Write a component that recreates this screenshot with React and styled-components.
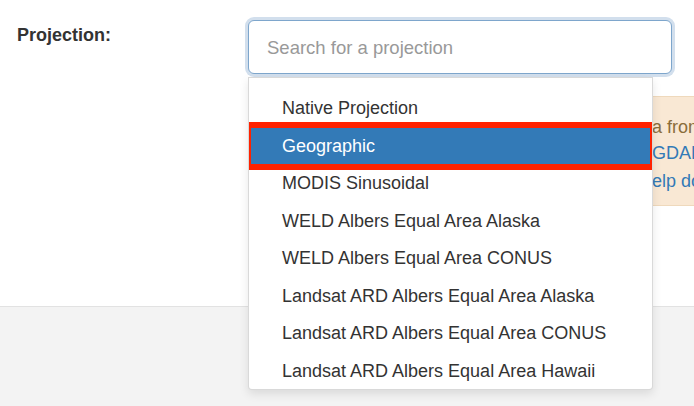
import React from "react";
import styled, { createGlobalStyle } from "styled-components";

const GlobalStyle = createGlobalStyle`
  html, body {
    margin: 0;
    padding: 0;
    background: #ffffff;
    overflow: hidden;
  }

  body {
    font-family: "Liberation Sans", Arial, Helvetica, sans-serif;
    color: #333333;
  }
`;

const Page = styled.div`
  width: 694px;
  height: 406px;
  display: flex;
  flex-direction: column;
  overflow: hidden;
`;

const Main = styled.section`
  height: 306px;
  box-sizing: border-box;
  padding: 20px 22px 0 17px;
  background: #ffffff;
`;

const FormRow = styled.div`
  display: grid;
  grid-template-columns: 231px 424px;
`;

const Label = styled.label`
  margin-top: 4px;
  font-size: 18px;
  line-height: 22px;
  font-weight: 700;
  color: #333333;
`;

const Field = styled.div`
  display: flex;
  flex-direction: column;
`;

const Combo = styled.div`
  position: relative;
  z-index: 2;
`;

const SearchInput = styled.input`
  display: block;
  width: 100%;
  height: 54px;
  box-sizing: border-box;
  margin: 0;
  padding: 2px 18px 0;
  font-family: inherit;
  font-size: 18.5px;
  color: #555555;
  background: #ffffff;
  border: 1px solid #7ea6cc;
  border-radius: 6px;
  box-shadow: 0 0 0 3px #d2dfed;
  outline: none;

  &::placeholder {
    color: #999999;
  }
`;

const Alert = styled.div`
  width: 480px;
  margin-top: 22px;
  box-sizing: border-box;
  padding: 17px 15px 11px;
  background: #f9e8d4;
  border: 1px solid #efd9bc;
  font-size: 18px;
  line-height: 26px;
  color: #8a6d3b;
  overflow: hidden;
`;

const Para = styled.p`
  margin: ${(p) => (p.$gap ? "2px" : "0")} 0 0;
  white-space: nowrap;
`;

const Lead = styled.span`
  display: inline-block;
  width: 388px;
  overflow: hidden;
  white-space: nowrap;
  vertical-align: bottom;
`;

const Link = styled.a`
  color: #337ab7;
  text-decoration: none;
`;

const Menu = styled.ul`
  position: absolute;
  top: calc(100% + 3px);
  left: 0;
  width: 405px;
  height: 313px;
  box-sizing: border-box;
  margin: 0;
  padding: 12px 0 0;
  list-style: none;
  background: #ffffff;
  border: 1px solid rgba(0, 0, 0, 0.15);
  border-radius: 0 0 4px 4px;
  box-shadow: 0 4px 10px rgba(0, 0, 0, 0.1);
  overflow: hidden;
`;

const Item = styled.li`
  position: relative;
  height: 37.5px;
  display: flex;
  align-items: center;
  padding-left: 33px;
  font-size: 18px;
  white-space: nowrap;
  color: ${(p) => (p.$active ? "#ffffff" : "#333333")};
  background: ${(p) => (p.$active ? "#337ab7" : "transparent")};
`;

const Highlight = styled.span`
  position: absolute;
  top: -6px;
  bottom: -5px;
  left: -4px;
  right: -4px;
  border: 6px solid #ff2200;
  pointer-events: none;
`;

const Footer = styled.footer`
  flex: 1;
  background: #f3f3f3;
  border-top: 1px solid #e2e2e2;
`;

const projections = [
  "Native Projection",
  "Geographic",
  "MODIS Sinusoidal",
  "WELD Albers Equal Area Alaska",
  "WELD Albers Equal Area CONUS",
  "Landsat ARD Albers Equal Area Alaska",
  "Landsat ARD Albers Equal Area CONUS",
  "Landsat ARD Albers Equal Area Hawaii",
];

const App = () => {
  const active = "Geographic";

  return (
    <Page>
      <GlobalStyle />
      <Main>
        <FormRow>
          <Label htmlFor="projection">Projection:</Label>
          <Field>
            <Combo>
              <SearchInput id="projection" placeholder="Search for a projection" />
              <Menu>
                {projections.map((name) => (
                  <Item key={name} $active={name === active}>
                    {name}
                    {name === active && <Highlight />}
                  </Item>
                ))}
              </Menu>
            </Combo>
            <Alert>
              <Para>
                <Lead>Reprojecting will resample the dat</Lead>a from
              </Para>
              <Para>
                <Lead>Reprojection is performed with </Lead>
                <Link href="#">GDAL</Link>
              </Para>
              <Para $gap>
                <Lead>For more information see the h</Lead>
                <Link href="#">elp do</Link>
              </Para>
            </Alert>
          </Field>
        </FormRow>
      </Main>
      <Footer />
    </Page>
  );
};

export default App;
